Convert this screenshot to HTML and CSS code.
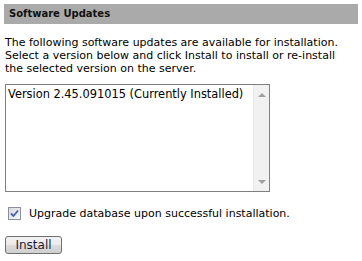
FILE: index.html
```html
<!DOCTYPE html>
<html lang="en">
<head>
  <meta charset="UTF-8" />
  <title>Software Updates</title>
  <link rel="stylesheet" href="styles.css">
</head>
<body>
  <div class="panel">
    <div class="panel-header">Software Updates</div>
    <p class="intro">
      The following software updates are available for installation.<br>
      Select a version below and click Install to install or re-install<br>
      the selected version on the server.
    </p>
    <div class="listbox">
      <div class="list-items">
        <div class="list-item">Version 2.45.091015 (Currently Installed)</div>
      </div>
      <div class="scrollbar">
        <span class="arrow up"></span>
        <span class="arrow down"></span>
      </div>
    </div>
    <label class="check-row">
      <span class="checkbox">
        <svg width="9" height="9" viewBox="0 0 9 9">
          <path d="M1 4.5 L3.5 7 L8 1.5" fill="none" stroke="#4a5eb0" stroke-width="1.8"/>
        </svg>
      </span>
      Upgrade database upon successful installation.
    </label>
    <button class="install-btn">Install</button>
  </div>
</body>
</html>
```

FILE: styles.css
```css
* {
  box-sizing: border-box;
}

body {
  margin: 0;
  padding: 4px;
  background: #ffffff;
  font-family: "DejaVu Sans", Verdana, sans-serif;
  font-size: 11px;
  color: #000000;
}

.panel {
  width: 354px;
}

.panel-header {
  height: 20px;
  line-height: 20px;
  padding-left: 5px;
  background: #aaaaaa;
  font-size: 10px;
  font-weight: bold;
  color: #111111;
}

.intro {
  margin: 12px 0 0 1px;
  line-height: 13px;
}

.listbox {
  display: flex;
  width: 265px;
  height: 108px;
  margin: 9px 0 0 1px;
  border: 1px solid #7f7f7f;
  background: #ffffff;
}

.list-items {
  flex: 1;
  padding: 2px 2px;
  font-size: 11.4px;
  line-height: 15px;
  white-space: nowrap;
  overflow: hidden;
}

.scrollbar {
  width: 16px;
  background: #f1f1f1;
  border-left: 1px solid #e8e8e8;
  display: flex;
  flex-direction: column;
  justify-content: space-between;
  align-items: center;
  padding: 8px 0 7px;
}

.arrow {
  width: 0;
  height: 0;
  border-left: 4px solid transparent;
  border-right: 4px solid transparent;
}

.arrow.up {
  border-bottom: 4px solid #a0a0a0;
}

.arrow.down {
  border-top: 4px solid #a0a0a0;
}

.check-row {
  display: flex;
  align-items: center;
  gap: 8px;
  margin: 15px 0 0 4px;
}

.checkbox {
  display: flex;
  justify-content: center;
  align-items: center;
  width: 13px;
  height: 13px;
  border: 1px solid #8a8fa0;
  background: linear-gradient(135deg, #d6d9e0, #f8f8f8);
}

.install-btn {
  display: block;
  margin: 16px 0 0 1px;
  width: 57px;
  height: 18px;
  padding: 0;
  border: 1px solid #707070;
  border-radius: 3px;
  background: linear-gradient(#f2f2f2 0%, #ebebeb 50%, #dddddd 51%, #cfcfcf 100%);
  font-family: "DejaVu Sans", Verdana, sans-serif;
  font-size: 12px;
  color: #1a1a3a;
}
```
